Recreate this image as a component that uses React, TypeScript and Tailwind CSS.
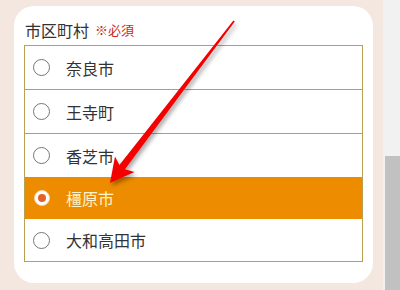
import React from "react";

const options = ["奈良市", "王寺町", "香芝市", "橿原市", "大和高田市"];
const heights = ["h-[44px] border-b", "h-[44px] border-b", "h-[43px]", "h-[42px]", "h-[42px]"];

export default function App() {
  return (
    <div
      className="relative flex w-[400px] h-[290px] overflow-hidden"
      style={{ fontFamily: '"Noto Sans CJK JP", "Noto Sans", sans-serif' }}
    >
      <div className="w-[383px] h-full bg-[#f3e7df] pt-[6px] pl-[14px] pr-[10px]">
        <div className="h-[277px] rounded-[20px] bg-white px-[10px] pt-[12px]">
          <div className="flex items-center h-[24px] mb-[3px] pl-[1px]">
            <span className="text-[16px] leading-[24px] text-[#333]">市区町村</span>
            <span className="ml-[6px] text-[13px] leading-[24px] text-[#c82a2a]">※必須</span>
          </div>
          <div className="border border-[#b9a152]">
            {options.map((o, i) => {
              const sel = i === 3;
              return (
                <div
                  key={o}
                  className={`flex items-center pl-[8px] border-[#b9a152] ${heights[i]} ${
                    sel ? "bg-[#ee8c00]" : "bg-white"
                  }`}
                >
                  {sel ? (
                    <span className="flex items-center justify-center w-[16px] h-[16px] rounded-full bg-white border border-[#f6d6b0] ml-[1px] mr-[16px]">
                      <span className="w-[8px] h-[8px] rounded-full bg-[#e2622a]" />
                    </span>
                  ) : (
                    <span className="w-[17px] h-[17px] rounded-full bg-white border border-[#767676] mr-[16px]" />
                  )}
                  <span
                    className={`text-[16px] leading-[20px] ${sel ? "text-[#fff3c8]" : "text-[#333]"}`}
                  >
                    {o}
                  </span>
                </div>
              );
            })}
          </div>
        </div>
      </div>
      <div className="w-[17px] h-full bg-[#f1f1f1] pt-[156px] pl-[2px]">
        <div className="w-[15px] h-full bg-[#c1c1c1]" />
      </div>
      <svg
        className="absolute left-0 top-0 pointer-events-none"
        width="400"
        height="290"
        viewBox="0 0 400 290"
      >
        <defs>
          <filter id="sh" x="-20%" y="-20%" width="140%" height="140%">
            <feDropShadow dx="2" dy="3" stdDeviation="2" floodColor="#000" floodOpacity="0.35" />
          </filter>
        </defs>
        <polygon
          filter="url(#sh)"
          fill="#f40000"
          points="110,183 115,156.5 119.4,165 233.4,20.5 234.8,21.6 125,169.2 134.5,172"
        />
      </svg>
    </div>
  );
}
